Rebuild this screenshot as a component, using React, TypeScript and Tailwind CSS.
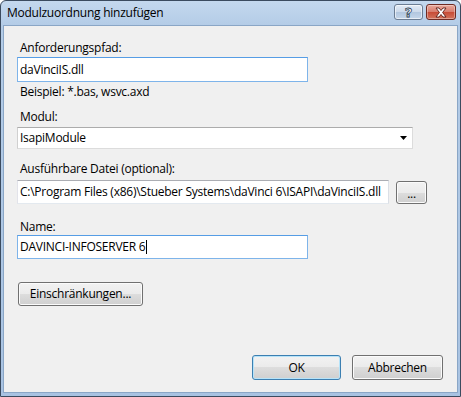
import React from "react";

const font = { fontFamily: '"Open Sans", "Noto Sans", sans-serif' };

function Label({ children, className = "" }: { children: React.ReactNode; className?: string }) {
  return <div className={`h-[15px] leading-[15px] text-[12px] tracking-[-0.25px] text-black pl-[3px] ${className}`}>{children}</div>;
}

function TextBox({ value, className = "", focused = false, caret = false }: { value: string; className?: string; focused?: boolean; caret?: boolean }) {
  return (
    <div
      className={`flex items-center bg-white border pl-[2px] text-[12px] tracking-[-0.25px] text-black whitespace-nowrap overflow-hidden ${
        focused
          ? "border-[#7eb4ea] border-t-[#569de5]"
          : "border-[#e3e9ef] border-t-[#abadb3] border-l-[#e2e3ea] border-r-[#dbdfe6]"
      } ${className}`}
    >
      <span>{value}</span>
      {caret && <span className="inline-block w-px h-[14px] bg-black ml-px" />}
    </div>
  );
}

function WinButton({ children, className = "", isDefault = false }: { children: React.ReactNode; className?: string; isDefault?: boolean }) {
  return (
    <div
      className={`flex items-center justify-center rounded-[3px] border text-[12px] tracking-[-0.25px] text-black ${
        isDefault ? "border-[#3c7fb1] shadow-[inset_0_0_0_1px_#b6e3f9]" : "border-[#707070] shadow-[inset_0_0_0_1px_#fbfbfb]"
      } bg-[linear-gradient(to_bottom,#f2f2f2_0%,#ebebeb_50%,#dddddd_50%,#cfcfcf_100%)] ${className}`}
    >
      {children}
    </div>
  );
}

export default function App() {
  return (
    <div style={font} className="w-[461px] h-[397px] bg-white">
      <div className="w-[461px] h-[397px] flex flex-col rounded-t-[6px] border border-[#3b4b5f] bg-[linear-gradient(to_bottom,#c4d8ee_0px,#b4cce7_24px,#a9c3e2_100%)] overflow-hidden">
        {/* title bar */}
        <div className="h-[24px] flex items-start shrink-0">
          <div className="pl-[6px] pt-[4px] text-[12px] tracking-[-0.25px] leading-[16px] text-black">Modulzuordnung hinzufügen</div>
          <div className="ml-auto flex pt-[3px] pr-[4px] gap-[3px]">
            <div className="w-[29px] h-[16px] rounded-[3px] border border-[#6b7d93] bg-[linear-gradient(to_bottom,#e3ecf6_0%,#cbd9ea_50%,#b1c6de_50%,#c5d6ea_100%)] flex items-center justify-center shadow-[inset_0_0_0_1px_rgba(255,255,255,0.6)]">
              <span className="text-[13px] font-bold leading-none text-white [-webkit-text-stroke:0.8px_#2d3f56]" style={{ fontFamily: '"DejaVu Sans", sans-serif' }}>?</span>
            </div>
            <div className="w-[30px] h-[16px] rounded-[3px] border border-[#6e2a22] bg-[linear-gradient(to_bottom,#e9a99c_0%,#d77c6c_50%,#c74a35_50%,#d2735c_100%)] flex items-center justify-center shadow-[inset_0_0_0_1px_rgba(255,255,255,0.35)]">
              <svg width="14" height="11" viewBox="0 0 14 11">
                <path d="M2 1 L5 1 L7 3.5 L9 1 L12 1 L8.6 5.5 L12 10 L9 10 L7 7.5 L5 10 L2 10 L5.4 5.5 Z" fill="#ffffff" stroke="#5a1e16" strokeWidth="0.9" strokeLinejoin="round" />
              </svg>
            </div>
          </div>
        </div>
        {/* client */}
        <div className="flex-1 ml-[2px] mr-[2px] mb-[3px] border border-[#8aa6c6] bg-[#f0f0f0] pl-[13px] pt-[14px]">
          <Label>Anforderungspfad:</Label>
          <TextBox value="daVinciIS.dll" className="mt-[2px] w-[291px] h-[25px]" focused />
          <Label className="mt-[2px]">Beispiel: *.bas, wsvc.axd</Label>
          <Label className="mt-[10px]">Modul:</Label>
          <div className="mt-[3px] w-[396px] h-[22px] flex items-center bg-white border border-[#acacac] border-b-[#dcdcdc] border-r-[#dcdcdc] border-l-[#d0d0d0] pl-[2px] text-[12px] tracking-[-0.25px]">
            <span>IsapiModule</span>
            <svg className="ml-auto mr-[5px]" width="7" height="4" viewBox="0 0 7 4">
              <path d="M0 0 H7 L3.5 4 Z" fill="#000" />
            </svg>
          </div>
          <Label className="mt-[12px]">Ausführbare Datei (optional):</Label>
          <div className="mt-[4px] flex items-start">
            <TextBox value="C:\Program Files (x86)\Stueber Systems\daVinci 6\ISAPI\daVinciIS.dll" className="w-[372px] h-[24px]" />
            <WinButton className="ml-[7px] mt-[1px] w-[31px] h-[23px]">
              <span className="leading-none pt-[2px]">...</span>
            </WinButton>
          </div>
          <Label className="mt-[15px]">Name:</Label>
          <TextBox value="DAVINCI-INFOSERVER 6" className="mt-[1px] w-[291px] h-[24px]" focused caret />
          <WinButton className="mt-[23px] ml-px w-[125px] h-[24px]">Einschränkungen...</WinButton>
          <div className="mt-[49px] flex pl-[235px] gap-[11px]">
            <WinButton className="w-[89px] h-[25px]" isDefault>OK</WinButton>
            <WinButton className="w-[91px] h-[25px]">Abbrechen</WinButton>
          </div>
        </div>
      </div>
    </div>
  );
}
